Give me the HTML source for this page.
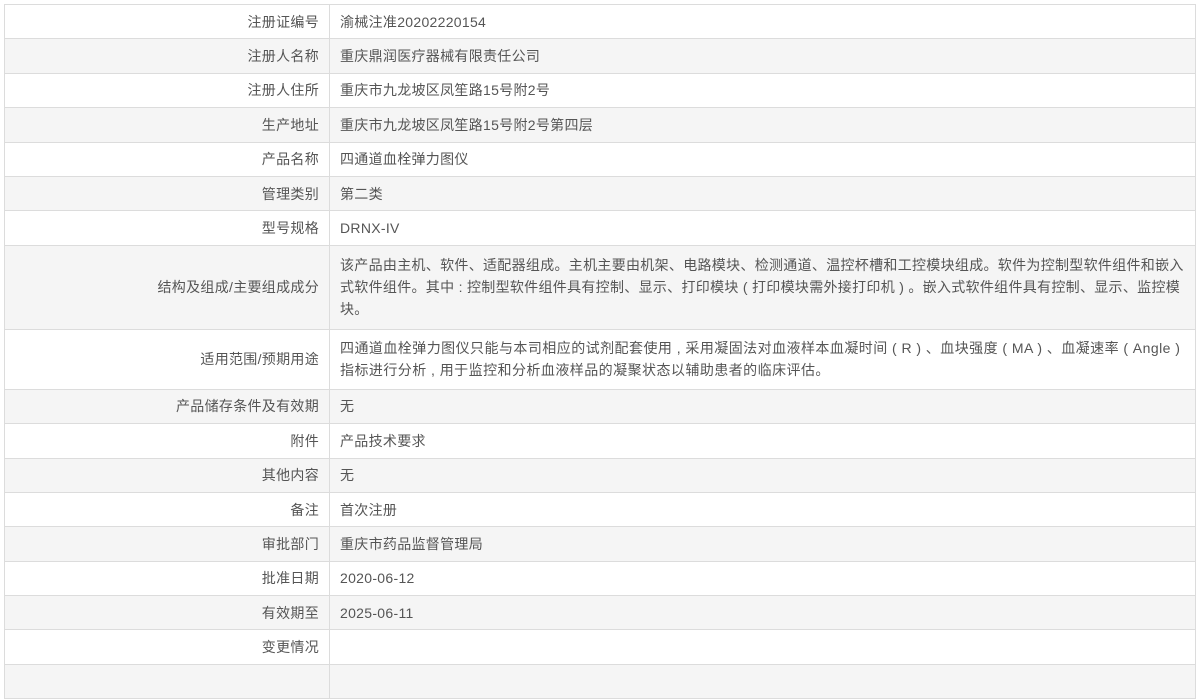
<!DOCTYPE html>
<html><head><meta charset="utf-8"><style>
body{margin:0;background:#fff;width:1200px;height:671px;overflow:hidden;font-family:"Liberation Sans","Noto Sans CJK SC",sans-serif;font-size:14px;color:#555}
table{position:absolute;left:4px;top:4px;width:1192px;border-collapse:collapse;table-layout:fixed}
td{border:1px solid #dcdcdc;padding:0 10px;height:34.4px;box-sizing:border-box;line-height:22px;letter-spacing:0.3px;word-break:break-all}
td.l{width:325px;text-align:right}
tr:nth-child(even) td{background:#f5f5f5}
</style></head><body>
<table>
<tr><td class="l">注册证编号</td><td>渝械注准20202220154</td></tr>
<tr><td class="l">注册人名称</td><td>重庆鼎润医疗器械有限责任公司</td></tr>
<tr><td class="l">注册人住所</td><td>重庆市九龙坡区凤笙路15号附2号</td></tr>
<tr><td class="l">生产地址</td><td>重庆市九龙坡区凤笙路15号附2号第四层</td></tr>
<tr><td class="l">产品名称</td><td>四通道血栓弹力图仪</td></tr>
<tr><td class="l">管理类别</td><td>第二类</td></tr>
<tr><td class="l">型号规格</td><td>DRNX-IV</td></tr>
<tr><td class="l" style="height:84px">结构及组成/主要组成成分</td><td style="height:84px">该产品由主机、软件、适配器组成。主机主要由机架、电路模块、检测通道、温控杯槽和工控模块组成。软件为控制型软件组件和嵌入式软件组件。其中 : 控制型软件组件具有控制、显示、打印模块 ( 打印模块需外接打印机 ) 。嵌入式软件组件具有控制、显示、监控模块。</td></tr>
<tr><td class="l" style="height:60px">适用范围/预期用途</td><td style="height:60px;letter-spacing:0.45px">四通道血栓弹力图仪只能与本司相应的试剂配套使用 , 采用凝固法对血液样本血凝时间 ( R ) 、血块强度 ( MA ) 、血凝速率 ( Angle ) 指标进行分析 , 用于监控和分析血液样品的凝聚状态以辅助患者的临床评估。</td></tr>
<tr><td class="l">产品储存条件及有效期</td><td>无</td></tr>
<tr><td class="l">附件</td><td>产品技术要求</td></tr>
<tr><td class="l">其他内容</td><td>无</td></tr>
<tr><td class="l">备注</td><td>首次注册</td></tr>
<tr><td class="l">审批部门</td><td>重庆市药品监督管理局</td></tr>
<tr><td class="l">批准日期</td><td>2020-06-12</td></tr>
<tr><td class="l">有效期至</td><td>2025-06-11</td></tr>
<tr><td class="l">变更情况</td><td></td></tr>
<tr><td class="l"></td><td></td></tr>
</table>
</body></html>
